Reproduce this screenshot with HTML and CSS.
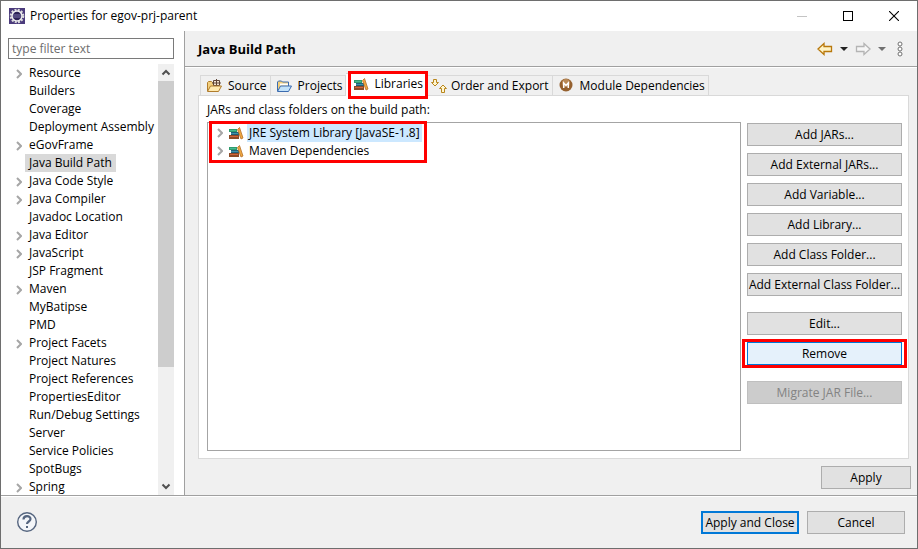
FILE: index.html
```html
<!DOCTYPE html>
<html lang="en">
<head>
  <meta charset="UTF-8" />
  <title>Properties for egov-prj-parent</title>
  <link rel="stylesheet" href="styles.css">
</head>
<body>
  <svg class="sprite" aria-hidden="true">
    <symbol id="twisty" viewBox="0 0 6 10">
      <path d="M1 1l4 4-4 4" fill="none" stroke="#a6a6a6" stroke-width="2" />
    </symbol>
    <symbol id="books" viewBox="0 0 16 16">
      <rect x="1" y="4" width="8" height="3" fill="#2f9c6c" />
      <rect x="2" y="5" width="6" height="1" fill="#48b894" />
      <rect x="3" y="7" width="8" height="3" fill="#1f5f7c" />
      <rect x="3" y="8" width="7" height="1" fill="#3f93a8" />
      <rect x="1" y="10" width="10" height="4" fill="#8c4a26" />
      <rect x="2" y="11" width="8" height="1" fill="#d0643c" />
      <path d="M9.500 4.500l2-2 3.500 10.500-2 1z" fill="#f0a840" stroke="#b5702a" stroke-width=".8" />
    </symbol>
  </svg>

  <div class="dialog">
    <div class="titlebar">
      <svg class="app-icon" width="16" height="16" viewBox="0 0 16 16">
        <rect width="16" height="16" fill="#4b3b7c" />
        <circle cx="8" cy="8" r="6.300" fill="none" stroke="#ddd" stroke-width="2" stroke-dasharray="2 1.300" />
        <circle cx="8" cy="8" r="5" fill="#2c2255" stroke="#f0f0f0" stroke-width="1.500" />
        <path d="M4 7h8M4 9h8" stroke="#7a72a8" />
      </svg>
      <span class="title">Properties for egov-prj-parent</span>
      <button class="win-btn" aria-label="Minimize">
        <svg width="10" height="10"><path d="M0 5.500h10" stroke="#c4c4c4" /></svg>
      </button>
      <button class="win-btn" aria-label="Maximize">
        <svg width="10" height="10"><rect x=".5" y=".5" width="9" height="9" fill="none" stroke="#000" /></svg>
      </button>
      <button class="win-btn" aria-label="Close">
        <svg width="10" height="10"><path d="M0 0l10 10M10 0L0 10" stroke="#000" stroke-width="1.100" /></svg>
      </button>
    </div>

    <div class="main">
      <div class="sidebar">
        <input class="filter" type="text" placeholder="type filter text" aria-label="type filter text" />
        <div class="nav">
          <ul class="nav-tree">
            <li><svg class="twisty"><use href="#twisty" /></svg><span>Resource</span></li>
            <li><span>Builders</span></li>
            <li><span>Coverage</span></li>
            <li><span>Deployment Assembly</span></li>
            <li><svg class="twisty"><use href="#twisty" /></svg><span>eGovFrame</span></li>
            <li class="current"><span>Java Build Path</span></li>
            <li><svg class="twisty"><use href="#twisty" /></svg><span>Java Code Style</span></li>
            <li><svg class="twisty"><use href="#twisty" /></svg><span>Java Compiler</span></li>
            <li><span>Javadoc Location</span></li>
            <li><svg class="twisty"><use href="#twisty" /></svg><span>Java Editor</span></li>
            <li><svg class="twisty"><use href="#twisty" /></svg><span>JavaScript</span></li>
            <li><span>JSP Fragment</span></li>
            <li><svg class="twisty"><use href="#twisty" /></svg><span>Maven</span></li>
            <li><span>MyBatipse</span></li>
            <li><span>PMD</span></li>
            <li><svg class="twisty"><use href="#twisty" /></svg><span>Project Facets</span></li>
            <li><span>Project Natures</span></li>
            <li><span>Project References</span></li>
            <li><span>PropertiesEditor</span></li>
            <li><span>Run/Debug Settings</span></li>
            <li><span>Server</span></li>
            <li><span>Service Policies</span></li>
            <li><span>SpotBugs</span></li>
            <li><svg class="twisty"><use href="#twisty" /></svg><span>Spring</span></li>
          </ul>
          <div class="scrollbar">
            <svg width="16" height="17"><path d="M4.500 10.500l3.500-3.500 3.500 3.500" fill="none" stroke="#505050" stroke-width="2" /></svg>
            <div class="track"><div class="thumb"></div></div>
            <svg width="16" height="17"><path d="M4.500 6.500l3.500 3.500 3.500-3.500" fill="none" stroke="#505050" stroke-width="2" /></svg>
          </div>
        </div>
      </div>

      <div class="page">
        <div class="page-header">
          <h1>Java Build Path</h1>
          <button class="tool" aria-label="Back">
            <svg width="16" height="14"><path d="M1 7l6-5.500v3h7.500v5H7v3z" fill="#fff3c4" stroke="#b8780c" stroke-width="1.300" /></svg>
          </button>
          <button class="tool" aria-label="Back history">
            <svg width="8" height="4"><path d="M0 0h8L4 4z" fill="#222" /></svg>
          </button>
          <button class="tool" aria-label="Forward" disabled>
            <svg width="16" height="14"><path d="M15 7L9 1.500v3H1.500v5H9v3z" fill="#f6f6f6" stroke="#b4b4b4" stroke-width="1.300" /></svg>
          </button>
          <button class="tool" aria-label="Forward history">
            <svg width="8" height="4"><path d="M0 0h8L4 4z" fill="#707070" /></svg>
          </button>
          <button class="tool" aria-label="Menu">
            <svg width="6" height="16" fill="#fff" stroke="#707070"><circle cx="3" cy="3" r="2" /><circle cx="3" cy="8" r="2" /><circle cx="3" cy="13" r="2" /></svg>
          </button>
        </div>

        <div class="page-body">
          <div class="tabs" role="tablist">
            <button class="tab" role="tab">
              <svg width="16" height="16" viewBox="0 0 16 16">
                <path d="M1.500 13V4.500l1-1h3l1 1h6V8" fill="#f3cf7c" stroke="#b07c2c" />
                <path d="M7.500 2.500h6v5h-6zM6 5h9M10.500 1v7" fill="#f5e5d2" stroke="#5e4436" />
                <path d="M1.500 13.500l3-5.500h11l-3 5.500z" fill="#ffe9ae" stroke="#b07c2c" />
              </svg>
              Source
            </button>
            <button class="tab" role="tab">
              <svg width="16" height="16" viewBox="0 0 16 16">
                <path d="M1.500 13V4l1-1h3l1 1h6v4" fill="#f3cf7c" stroke="#3c6cb0" />
                <path d="M4 6.500h8" stroke="#fff" stroke-width="2" />
                <path d="M1.500 13.500l3-5.500h11l-3 5.500z" fill="#c2e2fa" stroke="#3c6cb0" />
              </svg>
              Projects
            </button>
            <button class="tab active" role="tab" aria-selected="true">
              <svg width="16" height="16"><use href="#books" /></svg>
              Libraries
            </button>
            <button class="tab order" role="tab">
              <svg width="16" height="16" viewBox="0 0 16 16" fill="#fff6d0" stroke="#b9861c">
                <path d="M2.500 1.500h3v3h2L4 8 .5 4.500h2z" />
                <path d="M10.500 14.500h3v-4h2L12 7l-3.500 3.500h2z" />
              </svg>
              Order and Export
            </button>
            <button class="tab module" role="tab">
              <svg width="16" height="16" viewBox="0 0 16 16">
                <circle cx="8" cy="7" r="6.500" fill="#95612f" />
                <circle cx="8" cy="5" r="4" fill="#b98a58" />
                <path d="M5.700 10V5l2.300 2.500L10.300 5v5" fill="none" stroke="#fff" stroke-width="1.500" />
              </svg>
              Module Dependencies
            </button>
          </div>

          <div class="panel" role="tabpanel">
            <div class="panel-label" id="jarsLabel">JARs and class folders on the build path:</div>
            <div class="panel-row">
              <div class="entries">
                <ul class="entry-list" aria-labelledby="jarsLabel">
                  <li class="selected"><svg class="twisty"><use href="#twisty" /></svg><svg class="books"><use href="#books" /></svg><span>JRE System Library [JavaSE-1.8]</span></li>
                  <li><svg class="twisty"><use href="#twisty" /></svg><svg class="books"><use href="#books" /></svg><span>Maven Dependencies</span></li>
                </ul>
              </div>
              <div class="actions">
                <button class="btn">Add JARs...</button>
                <button class="btn">Add External JARs...</button>
                <button class="btn">Add Variable...</button>
                <button class="btn">Add Library...</button>
                <button class="btn">Add Class Folder...</button>
                <button class="btn">Add External Class Folder...</button>
                <button class="btn group">Edit...</button>
                <button class="btn hot">Remove</button>
                <button class="btn group" disabled>Migrate JAR File...</button>
              </div>
            </div>
          </div>

          <div class="apply-row">
            <button class="btn">Apply</button>
          </div>
        </div>
      </div>
    </div>

    <div class="footer">
      <button class="help" aria-label="Help">
        <svg width="22" height="22" viewBox="0 0 22 22">
          <circle cx="11" cy="11" r="9.300" fill="#f4f6f9" stroke="#55657f" stroke-width="1.400" />
          <path d="M7.500 8.500c0-4.500 7-4.500 7-.500 0 2.500-3.500 2.500-3.500 5" fill="none" stroke="#55657f" stroke-width="2.200" />
          <rect x="10" y="15" width="2" height="2" fill="#55657f" />
        </svg>
      </button>
      <button class="btn default">Apply and Close</button>
      <button class="btn">Cancel</button>
    </div>
  </div>
</body>
</html>
```
FILE: styles.css
```css
* {
  box-sizing: border-box;
}

body {
  margin: 0;
  font-family: "Open Sans", "Noto Sans", sans-serif;
  font-size: 12px;
  line-height: 18px;
  color: #000;
}

button,
input {
  font: inherit;
  color: inherit;
}

button {
  padding: 0;
  border: none;
  background: none;
}

svg {
  display: block;
  flex: none;
}

ul {
  list-style: none;
  margin: 0;
  padding: 0;
}

.sprite {
  position: absolute;
  width: 0;
  height: 0;
}

.dialog {
  display: flex;
  flex-direction: column;
  height: 100vh;
  border: 1px solid #6e6e6e;
  background: #f0f0f0;
}

/* title bar */
.titlebar {
  display: flex;
  align-items: center;
  height: 30px;
  padding-left: 8px;
  background: #fff;
}

.title {
  flex: 1;
  margin-left: 5px;
}

.win-btn {
  display: flex;
  align-items: center;
  justify-content: center;
  width: 46px;
  height: 30px;
}

/* left side */
.main {
  display: flex;
  flex: 1;
  min-height: 0;
}

.sidebar {
  display: flex;
  flex-direction: column;
  width: 184px;
  padding: 7px 10px 0 7px;
  border-right: 1px solid #a0a0a0;
  background: #fff;
}

.filter {
  width: 100%;
  height: 21px;
  padding: 0 3px;
  border: 1px solid #7a7a7a;
  border-radius: 0;
  outline: none;
}

.filter::placeholder {
  color: #6d6d6d;
}

.nav {
  display: flex;
  flex: 1;
  min-height: 0;
  margin-top: 5px;
}

.nav-tree {
  flex: 1;
  overflow: hidden;
}

.nav-tree li {
  position: relative;
  padding-left: 17px;
  height: 18px;
  white-space: nowrap;
}

.nav-tree span {
  display: inline-block;
  padding: 0 4px;
}

.nav-tree .current span {
  background: #d9d9d9;
}

.twisty {
  width: 6px;
  height: 10px;
}

.nav-tree .twisty {
  position: absolute;
  left: 8px;
  top: 5px;
}

.scrollbar {
  display: flex;
  flex-direction: column;
  width: 16px;
  background: #f0f0f0;
}

.track {
  flex: 1;
}

.thumb {
  height: 72%;
  background: #cdcdcd;
}

/* right side */
.page {
  display: flex;
  flex-direction: column;
  flex: 1;
  min-width: 0;
}

.page-header {
  display: flex;
  align-items: center;
  gap: 7px;
  height: 36px;
  padding: 1px 14px 0 13px;
  border-bottom: 1px solid #a0a0a0;
  box-shadow: 0 1px #fff;
}

.page-header h1 {
  flex: 1;
  margin: 0;
  font-size: 13px;
  line-height: 18px;
}

.tool:last-child {
  margin-left: 4px;
}

.page-body {
  display: flex;
  flex-direction: column;
  flex: 1;
  min-height: 0;
  padding: 6px 6px 6px 13px;
}

.tabs {
  display: flex;
  align-items: flex-end;
  padding-left: 2px;
}

.tab {
  display: flex;
  align-items: center;
  gap: 6px;
  height: 20px;
  padding: 0 3px 0 5px;
  border: 1px solid #d9d9d9;
  border-bottom: none;
  border-left: none;
  white-space: nowrap;
}

.tab:first-child {
  border-left: 1px solid #d9d9d9;
}

.tab.order {
  gap: 4px;
  padding-left: 3px;
}

.tab.active {
  position: relative;
  gap: 5px;
  height: 23px;
  padding: 0 5px 3px 7px;
  margin-bottom: -1px;
  border-right: none;
  background: #fff;
}

/* callouts */
.tab.active::after,
.entry-list::after,
.btn.hot::after {
  content: "";
  position: absolute;
  border: 3px solid #f00;
  pointer-events: none;
}

.tab.active::after {
  inset: -3px 0 -3px 2px;
}

.entry-list::after {
  inset: -3px -5px -3px 1px;
}

.btn.hot::after {
  inset: -4px -6px;
}

.panel {
  display: flex;
  flex-direction: column;
  flex: 1;
  min-height: 0;
  margin-right: 2px;
  padding: 5px 6px 7px 8px;
  border: 1px solid #d9d9d9;
  background: #fff;
}

.panel-row {
  display: flex;
  flex: 1;
  gap: 6px;
  min-height: 0;
  margin-top: 3px;
}

.entries {
  flex: 1;
  border: 1px solid #a4a4a4;
}

.entry-list {
  position: relative;
  width: fit-content;
  margin-top: 1px;
}

.entry-list li {
  display: flex;
  align-items: center;
  height: 18px;
  padding-left: 9px;
}

.entry-list .books {
  width: 16px;
  height: 16px;
  margin: 0 3px 0 5px;
}

.entry-list span {
  padding: 0 2px;
}

.entry-list .selected span {
  background: #cce8ff;
}

.actions {
  display: flex;
  flex-direction: column;
  gap: 7px;
  width: 155px;
  padding-top: 1px;
}

.btn {
  position: relative;
  height: 23px;
  border: 1px solid #adadad;
  background: #e1e1e1;
  line-height: 21px;
  white-space: nowrap;
}

.btn.group {
  margin-top: 9px;
}

.btn.hot {
  border-color: #0078d7;
  background: #e5f1fb;
}

.btn.default {
  border: 2px solid #0078d7;
  line-height: 19px;
}

.btn:disabled {
  border-color: #bfbfbf;
  background: #ccc;
  color: #838383;
}

.apply-row {
  display: flex;
  justify-content: flex-end;
  padding-top: 7px;
}

.apply-row .btn {
  width: 90px;
}

/* bottom bar */
.footer {
  display: flex;
  align-items: center;
  gap: 8px;
  height: 53px;
  padding: 0 12px 0 15px;
  border-top: 1px solid #a0a0a0;
  box-shadow: inset 0 1px #fff;
}

.help {
  margin-right: auto;
}

.footer .btn {
  width: 98px;
}
```
